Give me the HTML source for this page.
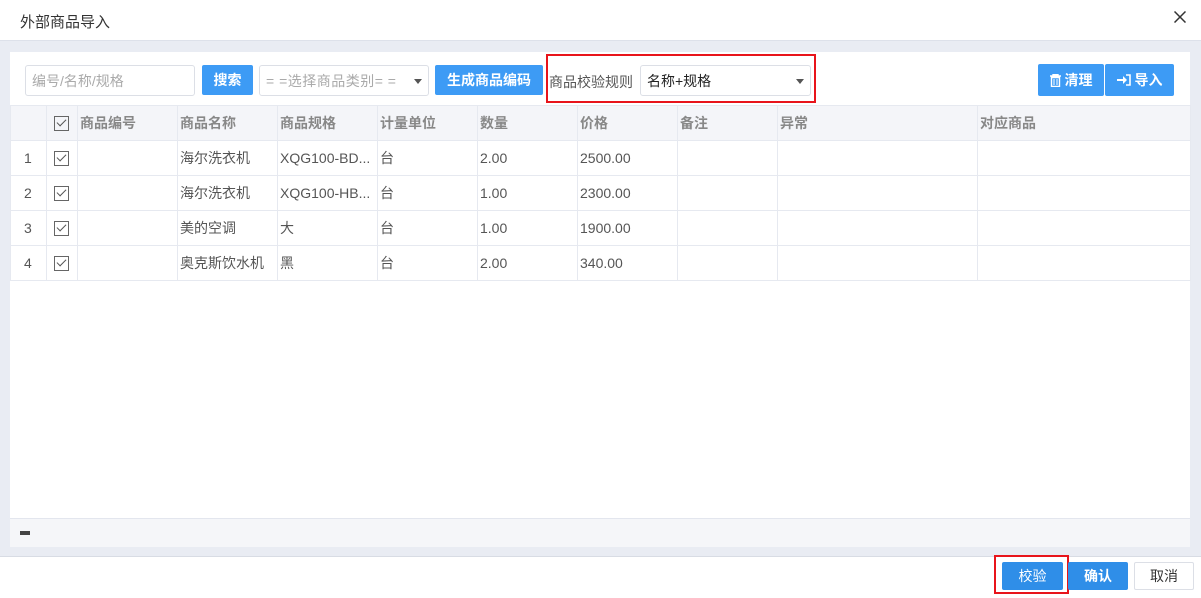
<!DOCTYPE html><html><head><meta charset="utf-8"><style>
*{box-sizing:border-box;margin:0;padding:0}
body{width:1201px;height:598px;position:relative;background:#fff;font-family:"Liberation Sans","Noto Sans CJK SC",sans-serif;font-size:14px;color:#555;overflow:hidden}
.a{position:absolute}
.btn{position:absolute;background:#3d9bf5;color:#fff;font-size:14px;font-weight:bold;display:flex;align-items:center;justify-content:center;border-radius:2px}
.inp{position:absolute;border:1px solid #dcdfe6;border-radius:3px;background:#fff;color:#aaa;font-size:14px;padding-left:6px;display:flex;align-items:center}
.caret{position:absolute;right:6px;top:13px;width:0;height:0;border-left:4px solid transparent;border-right:4px solid transparent;border-top:5px solid #555}
table{position:absolute;left:10px;top:105px;border-collapse:collapse;table-layout:fixed;width:1180px}
td,th{border:1px solid #e6e9f0;height:35px;padding-left:2px;text-align:left;font-size:14px;white-space:nowrap;overflow:hidden}
th{background:#f4f5f9;color:#888;font-weight:bold;height:35px}
td{color:#555}
.cb{display:inline-block;width:15px;height:15px;border:1px solid #666;position:relative;vertical-align:middle;margin-left:5px}
.cb:after{content:"";position:absolute;left:4px;top:0px;width:4px;height:8px;border-right:1.5px solid #555;border-bottom:1.5px solid #555;transform:rotate(45deg)}
</style></head><body>
<div class="a" style="left:20px;top:11px;font-size:15px;color:#333">外部商品导入</div>
<svg class="a" style="left:1174px;top:11px" width="12" height="12"><path d="M0.5 0.5L11.5 11.5M11.5 0.5L0.5 11.5" stroke="#333" stroke-width="1.5"/></svg>
<div class="a" style="left:0;top:40px;width:1201px;height:517px;background:#e9ecf3;border-top:1px solid #dde1ea;border-bottom:1px solid #d8dce4"></div>
<div class="a" style="left:10px;top:52px;width:1180px;height:495px;background:#fff"></div>
<div class="inp" style="left:25px;top:65px;width:170px;height:31px">编号/名称/规格</div>
<div class="btn" style="left:202px;top:65px;width:51px;height:30px">搜索</div>
<div class="inp" style="left:259px;top:65px;width:170px;height:31px;letter-spacing:0.5px">= =选择商品类别= =<span class="caret"></span></div>
<div class="btn" style="left:435px;top:65px;width:108px;height:30px">生成商品编码</div>
<div class="a" style="left:549px;top:72px;color:#555">商品校验规则</div>
<div class="inp" style="left:640px;top:65px;width:171px;height:31px;color:#222">名称+规格<span class="caret"></span></div>
<div class="a" style="left:546px;top:54px;width:270px;height:49px;border:2px solid #e8141b"></div>
<div class="btn" style="left:1038px;top:64px;width:66px;height:32px"><svg width="11" height="13" style="margin-right:4px"><path d="M0 2H11M3 2V0.5H8V2M1.5 3.5H9.5V12.5H1.5Z" stroke="#fff" fill="none" stroke-width="1.4"/><path d="M4 5V11M7 5V11" stroke="#fff"/></svg>清理</div>
<div class="btn" style="left:1105px;top:64px;width:69px;height:32px"><svg width="14" height="12" style="margin-right:4px"><path d="M0 5H6V2L10 6L6 10V7H0Z" fill="#fff"/><path d="M9 1H13V11H9" stroke="#fff" fill="none" stroke-width="1.6"/></svg>导入</div>
<table>
<colgroup><col style="width:36px"><col style="width:31px"><col style="width:100px"><col style="width:100px"><col style="width:100px"><col style="width:100px"><col style="width:100px"><col style="width:100px"><col style="width:100px"><col style="width:200px"><col style="width:213px"></colgroup>
<tr><th></th><th><span class="cb"></span></th><th>商品编号</th><th>商品名称</th><th>商品规格</th><th>计量单位</th><th>数量</th><th>价格</th><th>备注</th><th>异常</th><th>对应商品</th></tr>
<tr><td style="padding-left:13px">1</td><td><span class="cb"></span></td><td></td><td>海尔洗衣机</td><td>XQG100-BD...</td><td>台</td><td>2.00</td><td>2500.00</td><td></td><td></td><td></td></tr>
<tr><td style="padding-left:13px">2</td><td><span class="cb"></span></td><td></td><td>海尔洗衣机</td><td>XQG100-HB...</td><td>台</td><td>1.00</td><td>2300.00</td><td></td><td></td><td></td></tr>
<tr><td style="padding-left:13px">3</td><td><span class="cb"></span></td><td></td><td>美的空调</td><td>大</td><td>台</td><td>1.00</td><td>1900.00</td><td></td><td></td><td></td></tr>
<tr><td style="padding-left:13px">4</td><td><span class="cb"></span></td><td></td><td>奥克斯饮水机</td><td>黑</td><td>台</td><td>2.00</td><td>340.00</td><td></td><td></td><td></td></tr>
</table>
<div class="a" style="left:10px;top:518px;width:1180px;height:29px;background:#f5f6f9;border-top:1px solid #e3e6ee"></div>
<div class="a" style="left:20px;top:531px;width:10px;height:4px;background:#444"></div>
<div class="btn" style="left:1002px;top:562px;width:61px;height:28px;background:#2f8ee8;font-weight:normal">校验</div>
<div class="a" style="left:994px;top:555px;width:75px;height:39px;border:2px solid #e8141b"></div>
<div class="btn" style="left:1068px;top:562px;width:60px;height:28px;background:#2f8ee8">确认</div>
<div class="a" style="left:1134px;top:562px;width:60px;height:28px;border:1px solid #dcdfe6;border-radius:2px;color:#333;display:flex;align-items:center;justify-content:center">取消</div>
</body></html>
